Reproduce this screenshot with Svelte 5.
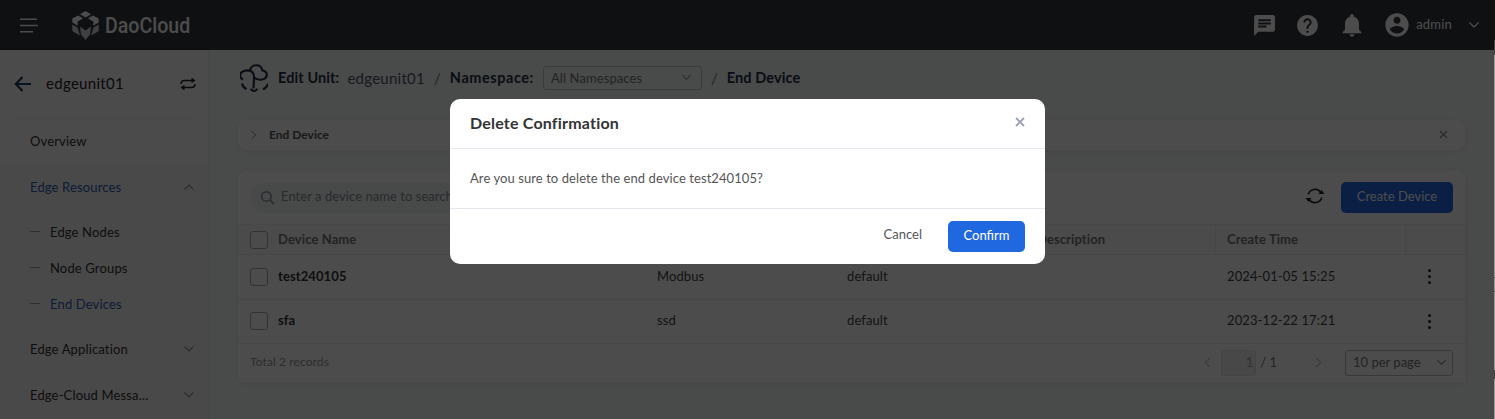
<script>
  const rows = [
    { name: 'test240105', protocol: 'Modbus', ns: 'default', time: '2024-01-05 15:25' },
    { name: 'sfa', protocol: 'ssd', ns: 'default', time: '2023-12-22 17:21' }
  ];
</script>

<div class="page">
  <header class="top">
    <svg class="burger" viewBox="0 0 18 15" width="18" height="15"><path d="M0 1.200h17M0 7.500h18M0 13.800h13" stroke="#fff" stroke-width="1.500" fill="none" /></svg>
    <svg class="logo" viewBox="0 0 27 29" width="27" height="29">
      <path fill="#fff" d="M13.500 0L19 3.200l-5.500 3.200L8 3.200zM6 4.500l5 2.800-5.500 3.400.3 4L.3 11.500v-4zM21 4.500l-5 2.800 5.500 3.400-.3 4 5.500-3.200v-4z" />
      <path fill="#d5d5d5" d="M.3 13.500l5.200 3L8 24.500l-5-2.700-2.700-1.800zM26.700 13.500l-5.200 3L19 24.500l5-2.700 2.700-1.800zM8 15.500l5.500 4 5.500-4-1 8-4.500 5.500L9 23.500z" />
    </svg>
    <span class="brand">DaoCloud</span>
    <div class="top-right">
      <svg viewBox="0 0 24 24" width="25" height="25" class="ti"><path d="M20 2H4c-1.100 0-1.990.9-1.990 2L2 22l4-4h14c1.100 0 2-.9 2-2V4c0-1.100-.9-2-2-2zM6 9h12v2H6V9zm8 5H6v-2h8v2zm4-6H6V6h12v2z" /></svg>
      <svg viewBox="0 0 24 24" width="25" height="25" class="ti"><path d="M12 2C6.480 2 2 6.480 2 12s4.480 10 10 10 10-4.480 10-10S17.520 2 12 2zm1 17h-2v-2h2v2zm2.070-7.750l-.9.920C13.450 12.900 13 13.500 13 15h-2v-.5c0-1.100.45-2.100 1.170-2.830l1.240-1.260c.37-.36.59-.86.59-1.410 0-1.100-.9-2-2-2s-2 .9-2 2H8c0-2.210 1.790-4 4-4s4 1.790 4 4c0 .88-.36 1.680-.93 2.250z" /></svg>
      <svg viewBox="0 0 24 24" width="28" height="28" class="ti"><path d="M12 22c1.100 0 2-.9 2-2h-4c0 1.100.9 2 2 2zm6-6v-5c0-3.070-1.630-5.640-4.500-6.320V4c0-.83-.67-1.500-1.500-1.500s-1.500.67-1.500 1.500v.68C7.640 5.360 6 7.920 6 11v5l-2 2v1h16v-1l-2-2z" /></svg>
      <svg viewBox="0 0 24 24" width="28" height="28" class="ti"><path d="M12 2C6.480 2 2 6.480 2 12s4.480 10 10 10 10-4.480 10-10S17.520 2 12 2zm0 3c1.660 0 3 1.340 3 3s-1.340 3-3 3-3-1.340-3-3 1.340-3 3-3zm0 14.200c-2.500 0-4.710-1.280-6-3.220.03-1.990 4-3.080 6-3.080 1.990 0 5.970 1.090 6 3.080-1.290 1.940-3.500 3.220-6 3.220z" /></svg>
      <span class="admin">admin</span>
      <svg class="tchev" viewBox="0 0 12 8" width="12" height="8"><path d="M1.500 1.500L6 6l4.500-4.500" fill="none" stroke="#fff" stroke-width="1.300" /></svg>
    </div>
  </header>

  <div class="body">
    <aside class="side">
      <div class="side-top">
        <div class="unit">
          <svg class="back" viewBox="0 0 17 16" width="17" height="16"><path d="M17 8H2M8.500 1L1.800 8l6.700 7" fill="none" stroke="#1f3a5f" stroke-width="2.200" /></svg>
          <span class="unit-name">edgeunit01</span>
          <svg class="swap" viewBox="0 0 16 14" width="16" height="14">
            <path d="M1 7C1 4.500 2.500 3.500 4.500 3.500H12M15 7c0 2.500-1.500 3.500-3.500 3.500H4" fill="none" stroke="#222" stroke-width="1.600" />
            <path d="M11.500.8l4 2.700-4 2.700zM4.500 7.800l-4 2.700 4 2.700z" fill="#222" />
          </svg>
        </div>
        <div class="item first">Overview</div>
      </div>
      <nav>
        <div class="item blue">Edge Resources
          <svg viewBox="0 0 12 8" width="12" height="8"><path d="M1.500 6.500L6 2l4.500 4.500" fill="none" stroke="#999" stroke-width="1.200" /></svg>
        </div>
        <div class="subs">
          <div class="sub"><i></i>Edge Nodes</div>
          <div class="sub"><i></i>Node Groups</div>
          <div class="sub on"><i></i>End Devices</div>
        </div>
        <div class="item">Edge Application
          <svg viewBox="0 0 12 8" width="12" height="8"><path d="M1.500 1.500L6 6l4.500-4.500" fill="none" stroke="#999" stroke-width="1.200" /></svg>
        </div>
        <div class="item">Edge-Cloud Messa...
          <svg viewBox="0 0 12 8" width="12" height="8"><path d="M1.500 1.500L6 6l4.500-4.500" fill="none" stroke="#999" stroke-width="1.200" /></svg>
        </div>
      </nav>
    </aside>

    <main class="main">
      <div class="crumbs">
        <svg viewBox="5 3.500 28 28" width="28" height="28" class="cloud" fill="none" stroke="#1f2f44" stroke-width="2.100">
          <path d="M8 19C4 17 4 12 9 10.500 13 9 19 10 19 16.500L18.500 28" />
          <path d="M15 10c.5-4 4-5.500 7-5.300 3 .3 5 2.800 5.500 5.300 3.500.5 5 3 4 6-1 2.500-4.500 3.500-7.500 3-2.500-.5-4.500-1-5-2.500" />
          <path d="M7 23c.5 2.500 2 4.500 4.500 5.500M33 23c-.5 2.500-2 4.500-5 5.700M15.500 28.500L19 31l3.500-2.500" />
        </svg>
        <b>Edit Unit:</b>
        <span class="cval">edgeunit01</span>
        <span class="slash">/</span>
        <b class="nsl">Namespace:</b>
        <div class="ns">All Namespaces
          <svg viewBox="0 0 12 8" width="11" height="7"><path d="M1.500 1.500L6 6l4.500-4.500" fill="none" stroke="#8a8a8a" stroke-width="1.200" /></svg>
        </div>
        <span class="slash">/</span>
        <b>End Device</b>
      </div>

      <div class="collapse">
        <svg viewBox="0 0 8 12" width="7" height="10"><path d="M1.500 1L6.500 6l-5 5" fill="none" stroke="#8a8a8a" stroke-width="1.200" /></svg>
        <span>End Device</span>
        <svg class="cx" viewBox="0 0 10 10" width="9" height="9"><path d="M1 1l8 8M9 1l-8 8" stroke="#8a94a6" stroke-width="1.500" /></svg>
      </div>

      <section class="card">
        <div class="tools">
          <div class="search">
            <svg viewBox="0 0 16 16" width="15" height="15"><circle cx="6.800" cy="6.800" r="5" fill="none" stroke="#8a94a6" stroke-width="1.700" /><path d="M10.500 10.500L15 15" stroke="#8a94a6" stroke-width="1.900" /></svg>
            <span>Enter a device name to search</span>
          </div>
          <svg class="sync" viewBox="0 0 20 20" width="20" height="20">
            <path d="M3.200 8.500A7 7 0 0 1 15.800 6.500M16.800 11.500A7 7 0 0 1 4.200 13.500" fill="none" stroke="#222" stroke-width="1.500" />
            <path d="M13.500 8h6l-3-4zM.5 12h6l-3 4z" fill="#222" />
          </svg>
          <div class="create">Create Device</div>
        </div>

        <div class="tr th">
          <div class="c1"><span class="box"></span>Device Name</div>
          <div></div>
          <div></div>
          <div class="cd">Description</div>
          <div class="ct">Create Time</div>
          <div class="ca"></div>
        </div>
        {#each rows as r}
          <div class="tr td">
            <div class="c1"><span class="box"></span><b>{r.name}</b></div>
            <div>{r.protocol}</div>
            <div>{r.ns}</div>
            <div class="cd"></div>
            <div class="ct">{r.time}</div>
            <div class="ca dots"><i></i><i></i><i></i></div>
          </div>
        {/each}

        <div class="foot">
          <span class="total">Total 2 records</span>
          <div class="pager">
            <svg viewBox="0 0 8 12" width="7" height="11"><path d="M6.500 1L1.500 6l5 5" fill="none" stroke="#b5b5b5" stroke-width="1.200" /></svg>
            <span class="pg">1</span>
            <span class="of">/ 1</span>
            <svg class="nx" viewBox="0 0 8 12" width="7" height="11"><path d="M1.500 1L6.500 6l-5 5" fill="none" stroke="#b5b5b5" stroke-width="1.200" /></svg>
            <div class="per">10 per page
              <svg viewBox="0 0 12 8" width="11" height="7"><path d="M1.500 1.500L6 6l4.500-4.500" fill="none" stroke="#777" stroke-width="1.200" /></svg>
            </div>
          </div>
        </div>
      </section>
    </main>
  </div>

  <div class="overlay">
    <div class="modal">
      <div class="m-head">
        <span>Delete Confirmation</span>
        <svg viewBox="0 0 10 10" width="10" height="10"><path d="M1 1l8 8M9 1l-8 8" stroke="#9aa3b2" stroke-width="1.800" /></svg>
      </div>
      <div class="m-body">Are you sure to delete the end device test240105?</div>
      <div class="m-foot">
        <span class="cancel">Cancel</span>
        <span class="confirm">Confirm</span>
      </div>
    </div>
  </div>
  <div class="edge"></div>
</div>

<style>
  :global(body) { margin: 0; }
  .page {
    position: relative;
    width: 1495px;
    height: 419px;
    overflow: hidden;
    background: #f6f7f9;
    font-family: Lato, "Noto Sans", sans-serif;
    font-size: 13px;
    color: #333;
  }
  .top {
    height: 50px;
    background: #34363c;
    display: flex;
    align-items: center;
    padding-left: 20px;
    box-sizing: border-box;
  }
  .logo { margin-left: 34px; }
  .brand {
    margin-left: 6px;
    font-family: Roboto, sans-serif;
    font-size: 22px;
    font-weight: 500;
    color: #fff;
    transform: scaleX(0.89);
    transform-origin: left center;
  }
  .top-right {
    margin-left: auto;
    display: flex;
    align-items: center;
    padding-right: 15px;
  }
  .ti { fill: #fff; display: block; margin-right: 18px; }
  .ti:nth-child(2) { margin-right: 18px; }
  .ti:nth-child(3) { margin-right: 17px; }
  .ti:nth-child(4) { margin-right: 5px; }
  .admin { color: #fff; font-size: 13px; padding-bottom: 2px; letter-spacing: 0.2px; }
  .tchev { margin-left: 16px; }

  .body { display: flex; }
  .side {
    width: 208px;
    height: 369px;
    flex: none;
    background: #f3f4f6;
    box-shadow: 1px 0 3px rgba(0, 0, 0, 0.06);
    letter-spacing: 0.15px;
  }
  .side-top { background: #fbfbfc; }
  .unit {
    height: 68px;
    margin: 0 15px;
    display: flex;
    align-items: center;
    gap: 15px;
    border-bottom: 1px solid #eceef2;
    color: #222;
    font-size: 15px;
    letter-spacing: 0.3px;
  }
  .back { margin-left: -1px; }
  .unit-name { flex: 1; padding-bottom: 2px; }
  .swap { margin-right: -3px; }
  .item {
    height: 46px;
    box-sizing: border-box;
    display: flex;
    align-items: center;
    justify-content: space-between;
    padding: 0 13px 1px 30px;
    color: #333;
  }
  .item svg { margin-top: 1px; }
  .first { height: 45px; padding-bottom: 2px; }
  .item.blue { color: #2e5fb3; }
  .subs { padding: 4px 0; }
  .sub {
    height: 36px;
    box-sizing: border-box;
    display: flex;
    align-items: center;
    padding: 0 0 1px 30px;
    color: #333;
  }
  .sub i { width: 10px; height: 1px; background: #999; margin-right: 10px; }
  .sub.on { color: #2e5fb3; }

  .main { flex: 1; padding: 0 30px; min-width: 0; }
  .crumbs {
    height: 56px;
    box-sizing: border-box;
    display: flex;
    align-items: center;
    padding: 0 0 1px 2px;
    font-size: 14.500px;
    letter-spacing: 0.1px;
    color: #2b3a4f;
  }
  .crumbs b { font-weight: 700; color: #1f2f44; }
  .crumbs .nsl { letter-spacing: 0.55px; }
  .cloud { margin-right: 10px; }
  .cval { margin-left: 8px; font-size: 15px; color: #4f5a6b; letter-spacing: 0.25px; }
  .slash { margin: 0 9px; color: #777; font-size: 15px; }
  .ns {
    width: 159px;
    height: 24px;
    margin-left: 9px;
    box-sizing: border-box;
    border: 1px solid #c4c4c4;
    border-radius: 3px;
    display: flex;
    align-items: center;
    justify-content: space-between;
    padding: 0 9px 0 7px;
    font-size: 13px;
    letter-spacing: 0.1px;
    color: #777;
  }
  .collapse {
    margin-top: 14px;
    height: 30px;
    box-sizing: border-box;
    background: #fff;
    border-radius: 8px;
    box-shadow: 0 1px 4px rgba(0, 0, 0, 0.08);
    display: flex;
    align-items: center;
    padding: 0 17px 1px 12px;
    gap: 12px;
    font-size: 12px;
    font-weight: 700;
    color: #555;
  }
  .cx { margin-left: auto; }
  .card {
    margin-top: 21px;
    height: 211px;
    background: #fff;
    border-radius: 8px 8px 0 0;
    box-shadow: 0 1px 4px rgba(0, 0, 0, 0.08);
    overflow: hidden;
  }
  .tools {
    height: 53px;
    display: flex;
    align-items: center;
    padding: 0 12px;
  }
  .search {
    width: 300px;
    height: 30px;
    background: #f2f3f5;
    border-radius: 15px;
    display: flex;
    align-items: center;
    gap: 6px;
    padding: 0 0 0 10px;
    color: #8a8f98;
  }
  .search span { padding-bottom: 4px; letter-spacing: 0.05px; }
  .search svg { margin-bottom: 1px; }
  .sync { margin: 0 16px 3px auto; }
  .create {
    width: 112px;
    height: 31px;
    box-sizing: border-box;
    background: #2468e0;
    border-radius: 5px;
    color: #fff;
    display: flex;
    align-items: center;
    justify-content: center;
    padding-bottom: 3px;
  }
  .tr {
    display: grid;
    grid-template-columns: 407px 190px 190px 190px 190px 60px;
    align-items: stretch;
    border-top: 1px solid #ebedf0;
    box-sizing: border-box;
    letter-spacing: 0.1px;
  }
  .tr > div { display: flex; align-items: center; padding: 0 0 2px 12px; }
  .th { height: 30px; background: #fafafa; color: #777; font-weight: 700; }
  .th .ct, .th .ca { border-left: 1px solid #ebedf0; padding-left: 11px; }
  .td { height: 44.500px; color: #444; }
  .c1 .box {
    width: 16px;
    height: 16px;
    border: 1px solid #a8a8a8;
    border-radius: 3px;
    margin: 2px 10px 0 0;
    flex: none;
  }
  .c1 b { font-weight: 700; color: #333; }
  .tr > .dots {
    flex-direction: column;
    align-items: flex-start;
    justify-content: center;
    gap: 3px;
    padding: 0 0 0 23px;
  }
  .dots i { width: 3px; height: 3px; border-radius: 50%; background: #222; }
  .foot {
    height: 38px;
    border-top: 1px solid #ebedf0;
    box-sizing: border-box;
    display: flex;
    align-items: center;
    justify-content: space-between;
    padding: 0 12px;
    font-size: 12px;
    color: #999;
  }
  .total { padding-bottom: 2px; letter-spacing: 0.1px; }
  .pager { display: flex; align-items: center; color: #777; font-size: 13px; }
  .pg {
    width: 35px;
    height: 26px;
    margin-left: 10px;
    box-sizing: border-box;
    background: #f0f0f0;
    border: 1px solid #e4e4e4;
    border-radius: 3px;
    display: flex;
    align-items: center;
    justify-content: flex-end;
    color: #aaa;
    padding: 0 2px 2px 0;
  }
  .of { margin-left: 4px; padding-bottom: 2px; }
  .nx { margin-left: 38px; }
  .per {
    width: 108px;
    height: 26px;
    box-sizing: border-box;
    margin-left: 23px;
    border: 1px solid #bbb;
    border-radius: 3px;
    display: flex;
    align-items: center;
    justify-content: space-between;
    padding: 0 5px 2px 7px;
  }
  .per svg { margin-top: 2px; }

  .overlay {
    position: absolute;
    inset: 0;
    background: rgba(0, 0, 0, 0.7);
    display: flex;
    justify-content: center;
    align-items: flex-start;
    padding-top: 99px;
    box-sizing: border-box;
  }
  .edge {
    position: absolute;
    top: 0;
    right: 0;
    width: 1px;
    height: 419px;
    background: linear-gradient(
      to bottom,
      #111 0 40px,
      #444 40px 55px,
      #9a9a9a 55px 277px,
      #555 277px 278px,
      #9a9a9a 278px 291px,
      #555 291px 292px,
      #9a9a9a 292px 370px,
      #444 370px 379px,
      #9a9a9a 379px
    );
  }
  .modal {
    width: 595px;
    height: 165px;
    background: #fff;
    border-radius: 10px;
    display: flex;
    flex-direction: column;
  }
  .m-head {
    height: 50px;
    box-sizing: border-box;
    border-bottom: 1px solid #e6e6ef;
    display: flex;
    align-items: center;
    justify-content: space-between;
    padding: 0 20px 3px;
    font-size: 16px;
    font-weight: 700;
    letter-spacing: 0.2px;
    color: #333;
  }
  .m-body {
    height: 60px;
    box-sizing: border-box;
    border-bottom: 1px solid #e6e6ef;
    display: flex;
    align-items: center;
    padding: 0 20px 2px;
    letter-spacing: 0.08px;
    color: #555;
  }
  .m-foot {
    flex: 1;
    display: flex;
    align-items: center;
    justify-content: flex-end;
    padding-right: 20px;
    gap: 26px;
  }
  .cancel { color: #555; padding-bottom: 5px; }
  .confirm {
    width: 77px;
    height: 31px;
    box-sizing: border-box;
    background: #2068e0;
    color: #fff;
    border-radius: 5px;
    display: flex;
    align-items: center;
    justify-content: center;
    padding-bottom: 3px;
  }
</style>
